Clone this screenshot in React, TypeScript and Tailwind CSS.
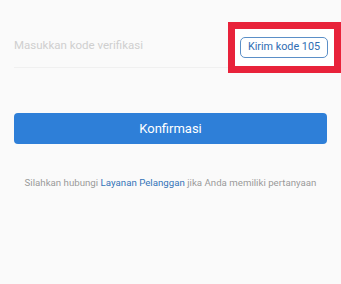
export default function App() {
  return (
    <div
      className="h-[284px] w-[341px] overflow-hidden bg-[#fafafa]"
      style={{ fontFamily: "Roboto, 'Noto Sans', sans-serif" }}
    >
      <div className="flex h-[51px] mt-[22px] items-stretch">
        <div className="ml-[14px] flex flex-1 items-center border-b border-[#f0f0f0] mb-[5px] pt-[3px]">
          <span className="text-[11.5px] text-[#cfcfcf]">Masukkan kode verifikasi</span>
        </div>
        <div className="flex w-[113px] shrink-0 items-center border-[7px] border-[#e8223a] bg-white pl-[5px]">
          <button className="h-[21px] w-[88px] rounded-[5px] border border-[#5b8fc7] text-[10.8px] leading-none text-[#2f6db3]">
            Kirim kode 105
          </button>
        </div>
      </div>
      <div className="mx-[14px] mt-[40px]">
        <button className="flex h-[31px] w-full items-center justify-center rounded-[4px] bg-[#2e7fd8] text-[13px] text-white">
          Konfirmasi
        </button>
      </div>
      <p className="mt-[32px] text-center text-[9.7px] text-[#9a9a9a]">
        Silahkan hubungi <span className="text-[#3574b8]">Layanan Pelanggan</span> jika Anda memiliki pertanyaan
      </p>
    </div>
  );
}
